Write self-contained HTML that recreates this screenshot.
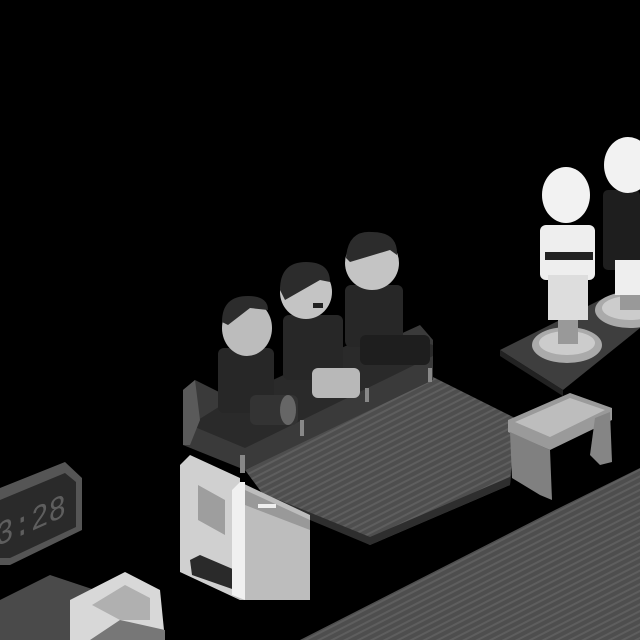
<!DOCTYPE html>
<html><head><style>html,body{margin:0;padding:0;background:#000;width:640px;height:640px;overflow:hidden}</style></head>
<body>
<svg width="640" height="640" viewBox="0 0 640 640" xmlns="http://www.w3.org/2000/svg">
<defs>
<pattern id="st" width="6" height="6" patternUnits="userSpaceOnUse" patternTransform="rotate(-27)">
<rect width="6" height="6" fill="#4e4e4e"/><rect width="6" height="2" fill="#5e5e5e"/>
</pattern>
</defs>
<rect width="640" height="640" fill="#000"/>
<polygon points="300,640 555,510 640,468 640,640" fill="url(#st)"/>
<polygon points="500,350 600,300 640,282 640,328 563,390" fill="#3e3e3e"/>
<polygon points="500,350 563,390 563,396 500,356" fill="#222"/>
<polygon points="245,470 433,377 515,418 510,485 370,545 262,493" fill="url(#st)"/>
<polygon points="262,493 370,537 510,477 510,485 370,545 262,500" fill="#2e2e2e"/>
<!-- sofa -->
<polygon points="183,390 195,380 245,405 420,325 433,340 433,380 245,470 183,445" fill="#3a3a3a"/>
<polygon points="190,425 245,448 433,356 433,345 380,330 230,400" fill="#2a2a2a"/>
<polygon points="183,390 195,380 200,420 190,445 183,445" fill="#5a5a5a"/>
<rect x="240" y="455" width="5" height="18" fill="#888"/><rect x="300" y="420" width="4" height="16" fill="#888"/><rect x="365" y="388" width="4" height="14" fill="#888"/><rect x="428" y="368" width="4" height="14" fill="#888"/>
<!-- person 3 -->
<rect x="345" y="285" width="58" height="62" rx="6" fill="#272727"/>
<ellipse cx="372" cy="263" rx="27" ry="27" fill="#c4c4c4"/>
<path d="M346 258 Q348 230 372 232 Q398 232 397 255 L390 250 L350 262Z" fill="#2c2c2c"/>
<rect x="360" y="335" width="70" height="30" rx="6" fill="#1e1e1e"/>
<!-- person 2 -->
<rect x="283" y="315" width="60" height="65" rx="6" fill="#272727"/>
<ellipse cx="306" cy="292" rx="26" ry="27" fill="#c4c4c4"/>
<path d="M280 290 Q280 262 306 262 Q330 262 330 282 L320 280 L285 300Z" fill="#2c2c2c"/>
<rect x="313" y="303" width="10" height="5" fill="#222"/>
<rect x="312" y="368" width="48" height="30" rx="6" fill="#b8b8b8"/>
<!-- person 1 -->
<rect x="218" y="348" width="56" height="65" rx="6" fill="#272727"/>
<ellipse cx="247" cy="328" rx="25" ry="28" fill="#bcbcbc"/>
<path d="M222 322 Q222 296 248 296 Q268 296 268 310 L250 308 L228 325Z" fill="#2c2c2c"/>
<rect x="250" y="395" width="48" height="30" rx="6" fill="#333"/>
<ellipse cx="288" cy="410" rx="8" ry="15" fill="#666"/>
<!-- cabinet -->
<polygon points="180,465 190,455 240,478 240,600 180,572" fill="#d0d0d0"/>
<polygon points="198,485 225,500 225,535 198,520" fill="#9e9e9e"/>
<polygon points="190,560 200,555 235,570 235,590 192,575" fill="#2a2a2a"/>
<polygon points="232,490 240,482 310,515 310,600 240,600 232,595" fill="#bdbdbd"/>
<polygon points="232,490 240,482 245,482 245,600 232,595" fill="#f0f0f0"/>
<polygon points="245,490 310,520 310,530 245,505" fill="#999"/>
<rect x="258" y="504" width="18" height="4" fill="#eee"/>
<!-- bench -->
<polygon points="508,420 570,393 612,408 612,420 550,450 508,432" fill="#9a9a9a"/>
<polygon points="515,422 570,398 605,410 550,437" fill="#bdbdbd"/>
<polygon points="510,432 550,450 552,500 540,495 512,478" fill="#808080"/>
<polygon points="595,418 610,412 612,462 600,465 590,455" fill="#858585"/>
<!-- mannequins -->
<ellipse cx="567" cy="345" rx="35" ry="18" fill="#aaa"/><ellipse cx="567" cy="343" rx="28" ry="12" fill="#ccc"/>
<rect x="558" y="318" width="20" height="26" fill="#999"/>
<ellipse cx="630" cy="310" rx="35" ry="18" fill="#aaa"/><ellipse cx="630" cy="308" rx="28" ry="12" fill="#ccc"/>
<rect x="620" y="290" width="20" height="20" fill="#999"/>
<rect x="540" y="225" width="55" height="55" rx="6" fill="#eee"/>
<rect x="545" y="252" width="48" height="8" fill="#222"/>
<rect x="548" y="275" width="40" height="45" fill="#ddd"/>
<ellipse cx="566" cy="195" rx="24" ry="28" fill="#f2f2f2"/>
<rect x="603" y="190" width="37" height="80" rx="5" fill="#1e1e1e"/>
<rect x="615" y="260" width="25" height="35" fill="#eee"/>
<ellipse cx="628" cy="165" rx="24" ry="28" fill="#f2f2f2"/>
<!-- clock -->
<polygon points="0,488 65,462 82,478 82,530 10,565 0,565" fill="#555"/>
<polygon points="0,500 65,473 76,482 76,527 10,558 0,558" fill="#2a2a2a"/>
<g transform="translate(0,545) skewY(-24)">
<text x="-4" y="0" font-family="Liberation Mono, monospace" font-size="34" fill="#5e5e5e" textLength="70" lengthAdjust="spacingAndGlyphs">3:28</text>
</g>
<!-- lower left -->
<polygon points="0,600 50,575 95,590 95,640 0,640" fill="#4a4a4a"/>
<polygon points="70,600 125,572 160,590 165,640 70,640" fill="#d8d8d8"/>
<polygon points="92,605 125,585 150,598 150,620 120,620" fill="#b0b0b0"/>
<polygon points="90,640 120,620 165,630 165,640" fill="#777"/>
</svg>
</body></html>
